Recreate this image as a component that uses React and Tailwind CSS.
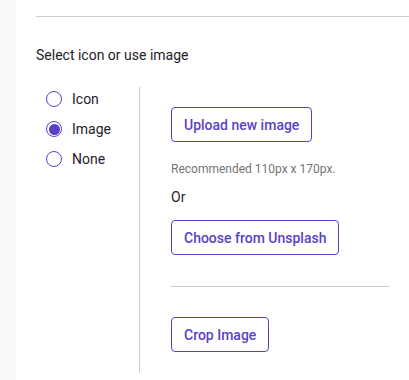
import React, { useState } from 'react';

const options = ['Icon', 'Image', 'None'];

function Radio({ checked }) {
  return (
    <span className="w-4 h-4 rounded-full border-[1.5px] border-[#5b3fc8] flex items-center justify-center bg-white">
      {checked && <span className="w-[11px] h-[11px] rounded-full bg-[#5b3fc8]" />}
    </span>
  );
}

function OutlineButton({ children }) {
  return (
    <button className="h-[35px] px-3 border border-[#5b3fc8] rounded-[4px] text-sm font-medium text-[#5b42c4] bg-white">
      {children}
    </button>
  );
}

export default function App() {
  const [mode, setMode] = useState('Image');

  return (
    <div className="flex w-[409px] h-[380px] bg-white overflow-hidden" style={{ fontFamily: 'Roboto, "Liberation Sans", sans-serif' }}>
      <div className="w-4 shrink-0 bg-[#f9f9f9]" />
      <div className="flex-1 pl-5">
        <div className="mt-4 border-t border-[#cccccc]" />
        <h2 className="mt-7 text-sm leading-5 text-[#1f2129]">Select icon or use image</h2>

        <div className="mt-[22px] flex">
          <div className="w-[103px] pl-[10px] flex flex-col gap-[6px]">
            {options.map((o) => (
              <label key={o} className="h-6 flex items-center gap-[10px] cursor-pointer" onClick={() => setMode(o)}>
                <Radio checked={mode === o} />
                <span className="text-sm text-[#1f2129]">{o}</span>
              </label>
            ))}
          </div>

          <div className="border-l border-[#cccccc] pl-[31px] pt-5 pb-[21px] flex flex-col items-start">
            <OutlineButton>Upload new image</OutlineButton>
            <p className="mt-[19px] text-xs leading-4 text-[#757575]">Recommended 110px x 170px.</p>
            <p className="mt-[10px] text-sm leading-5 text-[#1f2129]">Or</p>
            <div className="mt-[13px]">
              <OutlineButton>Choose from Unsplash</OutlineButton>
            </div>
            <div className="mt-[31px] w-[218px] border-t border-[#cccccc]" />
            <div className="mt-[30px]">
              <OutlineButton>Crop Image</OutlineButton>
            </div>
          </div>
        </div>
      </div>
    </div>
  );
}
